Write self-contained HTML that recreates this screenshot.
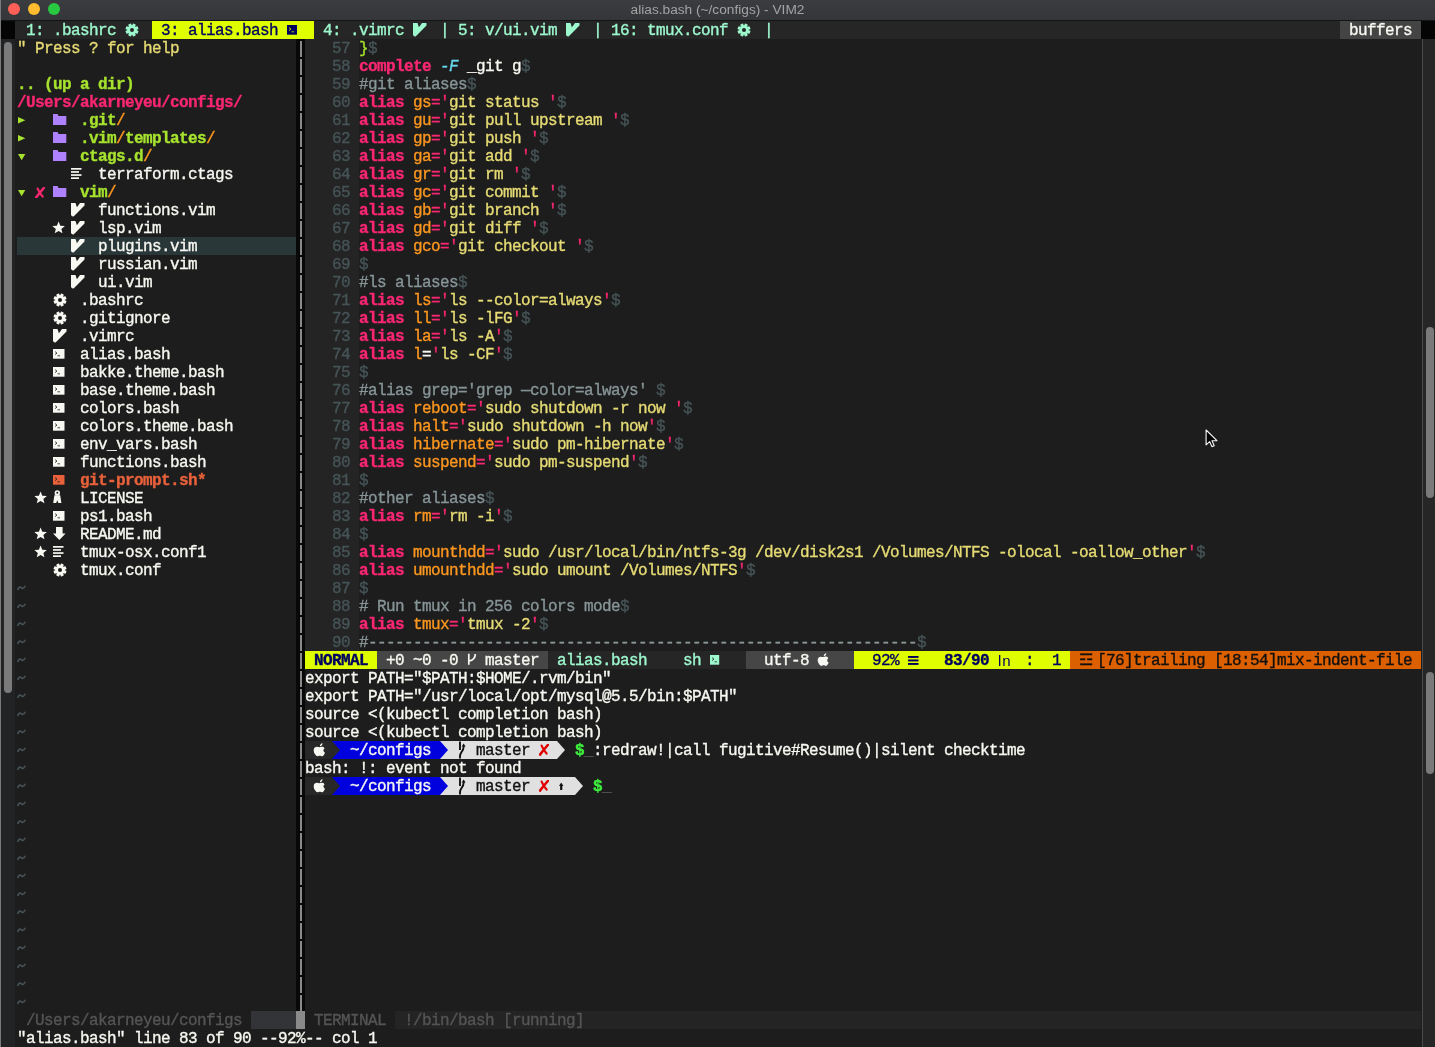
<!DOCTYPE html>
<html><head><meta charset="utf-8"><style>
html,body{margin:0;padding:0;}
body{will-change:transform;width:1435px;height:1047px;overflow:hidden;background:#1d1d1d;position:relative;}
body>div{position:absolute;}
.t{height:18px;line-height:18px;-webkit-text-stroke:0.35px currentColor;white-space:pre;font-family:"Liberation Mono",monospace;font-size:16px;letter-spacing:-0.6px;}
</style></head><body>
<div style="left:0;top:0;width:1435px;height:20px;background:linear-gradient(#3b3c40,#35363a)"></div>
<div style="left:0px;top:20px;width:1435px;height:1px;background:#141414;"></div>
<div style="left:0;top:0;width:1435px;height:20px;text-align:center;font:13.7px/19px 'Liberation Sans',sans-serif;color:#a3a3a3">alias.bash (~/configs) - VIM2</div>
<div style="left:7.800000000000001px;top:2.8px;width:12.2px;height:12.2px;border-radius:50%;background:#fe5f57"></div>
<div style="left:27.799999999999997px;top:2.8px;width:12.2px;height:12.2px;border-radius:50%;background:#febc2e"></div>
<div style="left:47.9px;top:2.8px;width:12.2px;height:12.2px;border-radius:50%;background:#28c840"></div>
<div style="left:1px;top:21px;width:14px;height:1026px;background:#222324;"></div>
<div style="left:1px;top:21px;width:14px;height:18px;background:#050505;"></div>
<div style="left:0px;top:0px;width:1px;height:1047px;background:#7a7a7a;"></div>
<div style="left:4px;top:41.5px;width:8px;height:651.5px;border-radius:4px;background:#7a7a7a"></div>
<div style="left:1421px;top:21px;width:14px;height:18px;background:#050505;"></div>
<div style="left:1421.5px;top:39px;width:1.7px;height:1008px;background:#4a4a4a;"></div>
<div style="left:1423.2px;top:39px;width:11.8px;height:1008px;background:#262626;"></div>
<div style="left:1426px;top:326.8px;width:8px;height:171px;border-radius:4px;background:#7a7a7a"></div>
<div style="left:1426px;top:671.5px;width:8px;height:102.3px;border-radius:4px;background:#7a7a7a"></div>
<div style="left:15.02px;top:21px;width:1405.98px;height:18px;background:#262626;"></div>
<div class="t" style="left:17px;top:22px;color:#9ef8ce;"> 1: .bashrc </div>
<svg style="position:absolute;left:124.5px;top:23px" width="14" height="14" viewBox="0 0 14 14"><rect x="5.45" y="0.5" width="3.1" height="3.2" rx="0.5" fill="#9ef8ce" transform="rotate(22.5 7 7)"/><rect x="5.45" y="0.5" width="3.1" height="3.2" rx="0.5" fill="#9ef8ce" transform="rotate(67.5 7 7)"/><rect x="5.45" y="0.5" width="3.1" height="3.2" rx="0.5" fill="#9ef8ce" transform="rotate(112.5 7 7)"/><rect x="5.45" y="0.5" width="3.1" height="3.2" rx="0.5" fill="#9ef8ce" transform="rotate(157.5 7 7)"/><rect x="5.45" y="0.5" width="3.1" height="3.2" rx="0.5" fill="#9ef8ce" transform="rotate(202.5 7 7)"/><rect x="5.45" y="0.5" width="3.1" height="3.2" rx="0.5" fill="#9ef8ce" transform="rotate(247.5 7 7)"/><rect x="5.45" y="0.5" width="3.1" height="3.2" rx="0.5" fill="#9ef8ce" transform="rotate(292.5 7 7)"/><rect x="5.45" y="0.5" width="3.1" height="3.2" rx="0.5" fill="#9ef8ce" transform="rotate(337.5 7 7)"/><circle cx="7" cy="7" r="4.7" fill="#9ef8ce"/><circle cx="7" cy="7" r="2.0" fill="#262626"/></svg>
<div style="left:152px;top:21px;width:162px;height:18px;background:#dfff00;"></div>
<div class="t" style="left:152px;top:22px;color:#00005f;"> 3: alias.bash    </div>
<svg style="position:absolute;left:287px;top:25px" width="12" height="10" viewBox="0 0 12 10"><rect x="0" y="0" width="10" height="9.7" fill="#00005f"/><path d="M2,2.6 L4,4.1 L2,5.6 M4.5,6.8 L7,6.8" stroke="#dfff00" stroke-width="0.8" fill="none"/></svg>
<div class="t" style="left:314px;top:22px;color:#9ef8ce;"> 4: .vimrc </div>
<svg style="position:absolute;left:413px;top:23px" width="14" height="14" viewBox="0 0 14 14"><polygon points="0,0 4.5,0 5.9,4.2 9.0,0 13.5,0 13.5,2.6 2.6,13.5 1,13.3 0,12 0,0" fill="#9ef8ce"/></svg>
<div class="t" style="left:431px;top:22px;color:#9ef8ce;"> | 5: v/ui.vim </div>
<svg style="position:absolute;left:566px;top:23px" width="14" height="14" viewBox="0 0 14 14"><polygon points="0,0 4.5,0 5.9,4.2 9.0,0 13.5,0 13.5,2.6 2.6,13.5 1,13.3 0,12 0,0" fill="#9ef8ce"/></svg>
<div class="t" style="left:584px;top:22px;color:#9ef8ce;"> | 16: tmux.conf </div>
<svg style="position:absolute;left:736.5px;top:23px" width="14" height="14" viewBox="0 0 14 14"><rect x="5.45" y="0.5" width="3.1" height="3.2" rx="0.5" fill="#9ef8ce" transform="rotate(22.5 7 7)"/><rect x="5.45" y="0.5" width="3.1" height="3.2" rx="0.5" fill="#9ef8ce" transform="rotate(67.5 7 7)"/><rect x="5.45" y="0.5" width="3.1" height="3.2" rx="0.5" fill="#9ef8ce" transform="rotate(112.5 7 7)"/><rect x="5.45" y="0.5" width="3.1" height="3.2" rx="0.5" fill="#9ef8ce" transform="rotate(157.5 7 7)"/><rect x="5.45" y="0.5" width="3.1" height="3.2" rx="0.5" fill="#9ef8ce" transform="rotate(202.5 7 7)"/><rect x="5.45" y="0.5" width="3.1" height="3.2" rx="0.5" fill="#9ef8ce" transform="rotate(247.5 7 7)"/><rect x="5.45" y="0.5" width="3.1" height="3.2" rx="0.5" fill="#9ef8ce" transform="rotate(292.5 7 7)"/><rect x="5.45" y="0.5" width="3.1" height="3.2" rx="0.5" fill="#9ef8ce" transform="rotate(337.5 7 7)"/><circle cx="7" cy="7" r="4.7" fill="#9ef8ce"/><circle cx="7" cy="7" r="2.0" fill="#262626"/></svg>
<div class="t" style="left:755px;top:22px;color:#9ef8ce;"> |</div>
<div style="left:1340px;top:21px;width:81px;height:18px;background:#444444;"></div>
<div class="t" style="left:1340px;top:22px;color:#f8f8f2;"> buffers </div>
<div style="left:17px;top:237px;width:279px;height:18px;background:#293739;"></div>
<div class="t" style="left:17px;top:40px;color:#e6db74;">" Press ? for help</div>
<div class="t" style="left:17px;top:76px;color:#a6e22e;font-weight:bold;">.. (up a dir)</div>
<div class="t" style="left:17px;top:94px;color:#f92672;font-weight:bold;">/Users/akarneyeu/configs/</div>
<svg style="position:absolute;left:17.7px;top:117px" width="8" height="7" viewBox="0 0 8 7"><polygon points="0,0 7.3,3.3 0,6.6" fill="#a6e22e"/></svg>
<svg style="position:absolute;left:52.6px;top:113px" width="14" height="13" viewBox="0 0 14 13"><path d="M0,0.9 L4.6,0.9 L5.5,3 L13.3,3 L13.3,12 L0,12 Z" fill="#ae81ff"/></svg>
<div class="t" style="left:80px;top:112px;color:#a6e22e;font-weight:bold;">.git</div>
<div class="t" style="left:116px;top:112px;color:#fd971f;">/</div>
<svg style="position:absolute;left:17.7px;top:135px" width="8" height="7" viewBox="0 0 8 7"><polygon points="0,0 7.3,3.3 0,6.6" fill="#a6e22e"/></svg>
<svg style="position:absolute;left:52.6px;top:131px" width="14" height="13" viewBox="0 0 14 13"><path d="M0,0.9 L4.6,0.9 L5.5,3 L13.3,3 L13.3,12 L0,12 Z" fill="#ae81ff"/></svg>
<div class="t" style="left:80px;top:130px;color:#a6e22e;font-weight:bold;">.vim</div>
<div class="t" style="left:116px;top:130px;color:#fd971f;">/</div>
<div class="t" style="left:125px;top:130px;color:#a6e22e;font-weight:bold;">templates</div>
<div class="t" style="left:206px;top:130px;color:#fd971f;">/</div>
<svg style="position:absolute;left:17.7px;top:154px" width="8" height="7" viewBox="0 0 8 7"><polygon points="0,0 7.3,0 3.65,6.3" fill="#a6e22e"/></svg>
<svg style="position:absolute;left:52.6px;top:149px" width="14" height="13" viewBox="0 0 14 13"><path d="M0,0.9 L4.6,0.9 L5.5,3 L13.3,3 L13.3,12 L0,12 Z" fill="#ae81ff"/></svg>
<div class="t" style="left:80px;top:148px;color:#a6e22e;font-weight:bold;">ctags.d</div>
<div class="t" style="left:143px;top:148px;color:#fd971f;">/</div>
<svg style="position:absolute;left:70.6px;top:168.2px" width="11" height="11" viewBox="0 0 11 11"><rect x="0" y="0" width="10.5" height="1.7" fill="#f8f8f2"/><rect x="0" y="3.1" width="8" height="1.7" fill="#f8f8f2"/><rect x="0" y="6.2" width="10.5" height="1.7" fill="#f8f8f2"/><rect x="0" y="9.3" width="8" height="1.7" fill="#f8f8f2"/></svg>
<div class="t" style="left:98px;top:166px;color:#f8f8f2;">terraform.ctags</div>
<svg style="position:absolute;left:17.7px;top:190px" width="8" height="7" viewBox="0 0 8 7"><polygon points="0,0 7.3,0 3.65,6.3" fill="#a6e22e"/></svg>
<svg style="position:absolute;left:35px;top:187px" width="10" height="11" viewBox="0 0 10 11"><path d="M9,0.8 C6.5,3.8 3.8,7.2 1,10.6" stroke="#f92672" stroke-width="2.5" stroke-linecap="round" fill="none"/><path d="M2.6,1.6 C4,4.6 5.6,7.4 7.6,9.6" stroke="#f92672" stroke-width="2.2" stroke-linecap="round" fill="none"/></svg>
<svg style="position:absolute;left:52.6px;top:185px" width="14" height="13" viewBox="0 0 14 13"><path d="M0,0.9 L4.6,0.9 L5.5,3 L13.3,3 L13.3,12 L0,12 Z" fill="#ae81ff"/></svg>
<div class="t" style="left:80px;top:184px;color:#a6e22e;font-weight:bold;">vim</div>
<div class="t" style="left:107px;top:184px;color:#fd971f;">/</div>
<svg style="position:absolute;left:70.5px;top:203px" width="14" height="14" viewBox="0 0 14 14"><polygon points="0,0 4.5,0 5.9,4.2 9.0,0 13.5,0 13.5,2.6 2.6,13.5 1,13.3 0,12 0,0" fill="#f8f8f2"/></svg>
<div class="t" style="left:98px;top:202px;color:#f8f8f2;">functions.vim</div>
<svg style="position:absolute;left:70.5px;top:221px" width="14" height="14" viewBox="0 0 14 14"><polygon points="0,0 4.5,0 5.9,4.2 9.0,0 13.5,0 13.5,2.6 2.6,13.5 1,13.3 0,12 0,0" fill="#f8f8f2"/></svg>
<div class="t" style="left:98px;top:220px;color:#f8f8f2;">lsp.vim</div>
<svg style="position:absolute;left:70.5px;top:239px" width="14" height="14" viewBox="0 0 14 14"><polygon points="0,0 4.5,0 5.9,4.2 9.0,0 13.5,0 13.5,2.6 2.6,13.5 1,13.3 0,12 0,0" fill="#f8f8f2"/></svg>
<div class="t" style="left:98px;top:238px;color:#f8f8f2;">plugins.vim</div>
<svg style="position:absolute;left:70.5px;top:257px" width="14" height="14" viewBox="0 0 14 14"><polygon points="0,0 4.5,0 5.9,4.2 9.0,0 13.5,0 13.5,2.6 2.6,13.5 1,13.3 0,12 0,0" fill="#f8f8f2"/></svg>
<div class="t" style="left:98px;top:256px;color:#f8f8f2;">russian.vim</div>
<svg style="position:absolute;left:70.5px;top:275px" width="14" height="14" viewBox="0 0 14 14"><polygon points="0,0 4.5,0 5.9,4.2 9.0,0 13.5,0 13.5,2.6 2.6,13.5 1,13.3 0,12 0,0" fill="#f8f8f2"/></svg>
<div class="t" style="left:98px;top:274px;color:#f8f8f2;">ui.vim</div>
<svg style="position:absolute;left:52.4px;top:220.5px" width="14" height="14" viewBox="0 0 14 14"><polygon points="6.60,0.40 8.30,4.65 12.88,4.96 9.36,7.90 10.48,12.34 6.60,9.90 2.72,12.34 3.84,7.90 0.32,4.96 4.90,4.65" fill="#f8f8f2"/></svg>
<svg style="position:absolute;left:52.5px;top:293px" width="14" height="14" viewBox="0 0 14 14"><rect x="5.45" y="0.5" width="3.1" height="3.2" rx="0.5" fill="#f8f8f2" transform="rotate(22.5 7 7)"/><rect x="5.45" y="0.5" width="3.1" height="3.2" rx="0.5" fill="#f8f8f2" transform="rotate(67.5 7 7)"/><rect x="5.45" y="0.5" width="3.1" height="3.2" rx="0.5" fill="#f8f8f2" transform="rotate(112.5 7 7)"/><rect x="5.45" y="0.5" width="3.1" height="3.2" rx="0.5" fill="#f8f8f2" transform="rotate(157.5 7 7)"/><rect x="5.45" y="0.5" width="3.1" height="3.2" rx="0.5" fill="#f8f8f2" transform="rotate(202.5 7 7)"/><rect x="5.45" y="0.5" width="3.1" height="3.2" rx="0.5" fill="#f8f8f2" transform="rotate(247.5 7 7)"/><rect x="5.45" y="0.5" width="3.1" height="3.2" rx="0.5" fill="#f8f8f2" transform="rotate(292.5 7 7)"/><rect x="5.45" y="0.5" width="3.1" height="3.2" rx="0.5" fill="#f8f8f2" transform="rotate(337.5 7 7)"/><circle cx="7" cy="7" r="4.7" fill="#f8f8f2"/><circle cx="7" cy="7" r="2.0" fill="#1d1d1d"/></svg>
<div class="t" style="left:80px;top:292px;color:#f8f8f2;">.bashrc</div>
<svg style="position:absolute;left:52.5px;top:311px" width="14" height="14" viewBox="0 0 14 14"><rect x="5.45" y="0.5" width="3.1" height="3.2" rx="0.5" fill="#f8f8f2" transform="rotate(22.5 7 7)"/><rect x="5.45" y="0.5" width="3.1" height="3.2" rx="0.5" fill="#f8f8f2" transform="rotate(67.5 7 7)"/><rect x="5.45" y="0.5" width="3.1" height="3.2" rx="0.5" fill="#f8f8f2" transform="rotate(112.5 7 7)"/><rect x="5.45" y="0.5" width="3.1" height="3.2" rx="0.5" fill="#f8f8f2" transform="rotate(157.5 7 7)"/><rect x="5.45" y="0.5" width="3.1" height="3.2" rx="0.5" fill="#f8f8f2" transform="rotate(202.5 7 7)"/><rect x="5.45" y="0.5" width="3.1" height="3.2" rx="0.5" fill="#f8f8f2" transform="rotate(247.5 7 7)"/><rect x="5.45" y="0.5" width="3.1" height="3.2" rx="0.5" fill="#f8f8f2" transform="rotate(292.5 7 7)"/><rect x="5.45" y="0.5" width="3.1" height="3.2" rx="0.5" fill="#f8f8f2" transform="rotate(337.5 7 7)"/><circle cx="7" cy="7" r="4.7" fill="#f8f8f2"/><circle cx="7" cy="7" r="2.0" fill="#1d1d1d"/></svg>
<div class="t" style="left:80px;top:310px;color:#f8f8f2;">.gitignore</div>
<svg style="position:absolute;left:52.7px;top:329px" width="14" height="14" viewBox="0 0 14 14"><polygon points="0,0 4.5,0 5.9,4.2 9.0,0 13.5,0 13.5,2.6 2.6,13.5 1,13.3 0,12 0,0" fill="#f8f8f2"/></svg>
<div class="t" style="left:80px;top:328px;color:#f8f8f2;">.vimrc</div>
<svg style="position:absolute;left:52.7px;top:349px" width="12" height="10" viewBox="0 0 12 10"><rect x="0" y="0" width="11.5" height="9.7" fill="#f8f8f2"/><path d="M2,2.6 L4,4.1 L2,5.6 M4.5,6.8 L7,6.8" stroke="#1d1d1d" stroke-width="0.8" fill="none"/></svg>
<div class="t" style="left:80px;top:346px;color:#f8f8f2;">alias.bash</div>
<svg style="position:absolute;left:52.7px;top:367px" width="12" height="10" viewBox="0 0 12 10"><rect x="0" y="0" width="11.5" height="9.7" fill="#f8f8f2"/><path d="M2,2.6 L4,4.1 L2,5.6 M4.5,6.8 L7,6.8" stroke="#1d1d1d" stroke-width="0.8" fill="none"/></svg>
<div class="t" style="left:80px;top:364px;color:#f8f8f2;">bakke.theme.bash</div>
<svg style="position:absolute;left:52.7px;top:385px" width="12" height="10" viewBox="0 0 12 10"><rect x="0" y="0" width="11.5" height="9.7" fill="#f8f8f2"/><path d="M2,2.6 L4,4.1 L2,5.6 M4.5,6.8 L7,6.8" stroke="#1d1d1d" stroke-width="0.8" fill="none"/></svg>
<div class="t" style="left:80px;top:382px;color:#f8f8f2;">base.theme.bash</div>
<svg style="position:absolute;left:52.7px;top:403px" width="12" height="10" viewBox="0 0 12 10"><rect x="0" y="0" width="11.5" height="9.7" fill="#f8f8f2"/><path d="M2,2.6 L4,4.1 L2,5.6 M4.5,6.8 L7,6.8" stroke="#1d1d1d" stroke-width="0.8" fill="none"/></svg>
<div class="t" style="left:80px;top:400px;color:#f8f8f2;">colors.bash</div>
<svg style="position:absolute;left:52.7px;top:421px" width="12" height="10" viewBox="0 0 12 10"><rect x="0" y="0" width="11.5" height="9.7" fill="#f8f8f2"/><path d="M2,2.6 L4,4.1 L2,5.6 M4.5,6.8 L7,6.8" stroke="#1d1d1d" stroke-width="0.8" fill="none"/></svg>
<div class="t" style="left:80px;top:418px;color:#f8f8f2;">colors.theme.bash</div>
<svg style="position:absolute;left:52.7px;top:439px" width="12" height="10" viewBox="0 0 12 10"><rect x="0" y="0" width="11.5" height="9.7" fill="#f8f8f2"/><path d="M2,2.6 L4,4.1 L2,5.6 M4.5,6.8 L7,6.8" stroke="#1d1d1d" stroke-width="0.8" fill="none"/></svg>
<div class="t" style="left:80px;top:436px;color:#f8f8f2;">env_vars.bash</div>
<svg style="position:absolute;left:52.7px;top:457px" width="12" height="10" viewBox="0 0 12 10"><rect x="0" y="0" width="11.5" height="9.7" fill="#f8f8f2"/><path d="M2,2.6 L4,4.1 L2,5.6 M4.5,6.8 L7,6.8" stroke="#1d1d1d" stroke-width="0.8" fill="none"/></svg>
<div class="t" style="left:80px;top:454px;color:#f8f8f2;">functions.bash</div>
<svg style="position:absolute;left:52.7px;top:475px" width="12" height="10" viewBox="0 0 12 10"><rect x="0" y="0" width="11.5" height="9.7" fill="#e8613b"/><path d="M2,2.6 L4,4.1 L2,5.6 M4.5,6.8 L7,6.8" stroke="#1d1d1d" stroke-width="0.8" fill="none"/></svg>
<div class="t" style="left:80px;top:472px;color:#e8613b;font-weight:bold;">git-prompt.sh*</div>
<svg style="position:absolute;left:53px;top:490px" width="9" height="14" viewBox="0 0 9 14"><circle cx="4.3" cy="3.0" r="2.7" fill="#f8f8f2"/><circle cx="4.3" cy="2.8" r="1.0" fill="#1d1d1d"/><path d="M1.4,5.2 L7.2,5.2 L8.4,13 L5.4,13 L4.3,10.2 L3.2,13 L0.2,13 Z" fill="#f8f8f2"/></svg>
<div class="t" style="left:80px;top:490px;color:#f8f8f2;">LICENSE</div>
<svg style="position:absolute;left:52.7px;top:511px" width="12" height="10" viewBox="0 0 12 10"><rect x="0" y="0" width="11.5" height="9.7" fill="#f8f8f2"/><path d="M2,2.6 L4,4.1 L2,5.6 M4.5,6.8 L7,6.8" stroke="#1d1d1d" stroke-width="0.8" fill="none"/></svg>
<div class="t" style="left:80px;top:508px;color:#f8f8f2;">ps1.bash</div>
<svg style="position:absolute;left:52.6px;top:526.5px" width="13" height="13" viewBox="0 0 13 13"><path d="M3,0 L9.6,0 L9.6,6.5 L12.6,6.5 L6.3,13 L0,6.5 L3,6.5 Z" fill="#f8f8f2"/></svg>
<div class="t" style="left:80px;top:526px;color:#f8f8f2;">README.md</div>
<svg style="position:absolute;left:52.6px;top:545.6px" width="11" height="11" viewBox="0 0 11 11"><rect x="0" y="0" width="10.5" height="1.7" fill="#f8f8f2"/><rect x="0" y="3.1" width="8" height="1.7" fill="#f8f8f2"/><rect x="0" y="6.2" width="10.5" height="1.7" fill="#f8f8f2"/><rect x="0" y="9.3" width="8" height="1.7" fill="#f8f8f2"/></svg>
<div class="t" style="left:80px;top:544px;color:#f8f8f2;">tmux-osx.conf1</div>
<svg style="position:absolute;left:52.5px;top:563px" width="14" height="14" viewBox="0 0 14 14"><rect x="5.45" y="0.5" width="3.1" height="3.2" rx="0.5" fill="#f8f8f2" transform="rotate(22.5 7 7)"/><rect x="5.45" y="0.5" width="3.1" height="3.2" rx="0.5" fill="#f8f8f2" transform="rotate(67.5 7 7)"/><rect x="5.45" y="0.5" width="3.1" height="3.2" rx="0.5" fill="#f8f8f2" transform="rotate(112.5 7 7)"/><rect x="5.45" y="0.5" width="3.1" height="3.2" rx="0.5" fill="#f8f8f2" transform="rotate(157.5 7 7)"/><rect x="5.45" y="0.5" width="3.1" height="3.2" rx="0.5" fill="#f8f8f2" transform="rotate(202.5 7 7)"/><rect x="5.45" y="0.5" width="3.1" height="3.2" rx="0.5" fill="#f8f8f2" transform="rotate(247.5 7 7)"/><rect x="5.45" y="0.5" width="3.1" height="3.2" rx="0.5" fill="#f8f8f2" transform="rotate(292.5 7 7)"/><rect x="5.45" y="0.5" width="3.1" height="3.2" rx="0.5" fill="#f8f8f2" transform="rotate(337.5 7 7)"/><circle cx="7" cy="7" r="4.7" fill="#f8f8f2"/><circle cx="7" cy="7" r="2.0" fill="#1d1d1d"/></svg>
<div class="t" style="left:80px;top:562px;color:#f8f8f2;">tmux.conf</div>
<svg style="position:absolute;left:34.4px;top:490.5px" width="14" height="14" viewBox="0 0 14 14"><polygon points="6.60,0.40 8.30,4.65 12.88,4.96 9.36,7.90 10.48,12.34 6.60,9.90 2.72,12.34 3.84,7.90 0.32,4.96 4.90,4.65" fill="#f8f8f2"/></svg>
<svg style="position:absolute;left:34.4px;top:526.5px" width="14" height="14" viewBox="0 0 14 14"><polygon points="6.60,0.40 8.30,4.65 12.88,4.96 9.36,7.90 10.48,12.34 6.60,9.90 2.72,12.34 3.84,7.90 0.32,4.96 4.90,4.65" fill="#f8f8f2"/></svg>
<svg style="position:absolute;left:34.4px;top:544.5px" width="14" height="14" viewBox="0 0 14 14"><polygon points="6.60,0.40 8.30,4.65 12.88,4.96 9.36,7.90 10.48,12.34 6.60,9.90 2.72,12.34 3.84,7.90 0.32,4.96 4.90,4.65" fill="#f8f8f2"/></svg>
<svg style="position:absolute;left:16.8px;top:585.4px" width="9" height="6" viewBox="0 0 9 6"><path d="M1,4.3 C1.6,2.2 2.8,1.6 4.2,2.6 C5.6,3.8 6.8,3.6 7.8,1.5" stroke="#465457" stroke-width="1.7" fill="none" stroke-linecap="round"/></svg>
<svg style="position:absolute;left:16.8px;top:603.4px" width="9" height="6" viewBox="0 0 9 6"><path d="M1,4.3 C1.6,2.2 2.8,1.6 4.2,2.6 C5.6,3.8 6.8,3.6 7.8,1.5" stroke="#465457" stroke-width="1.7" fill="none" stroke-linecap="round"/></svg>
<svg style="position:absolute;left:16.8px;top:621.4px" width="9" height="6" viewBox="0 0 9 6"><path d="M1,4.3 C1.6,2.2 2.8,1.6 4.2,2.6 C5.6,3.8 6.8,3.6 7.8,1.5" stroke="#465457" stroke-width="1.7" fill="none" stroke-linecap="round"/></svg>
<svg style="position:absolute;left:16.8px;top:639.4px" width="9" height="6" viewBox="0 0 9 6"><path d="M1,4.3 C1.6,2.2 2.8,1.6 4.2,2.6 C5.6,3.8 6.8,3.6 7.8,1.5" stroke="#465457" stroke-width="1.7" fill="none" stroke-linecap="round"/></svg>
<svg style="position:absolute;left:16.8px;top:657.4px" width="9" height="6" viewBox="0 0 9 6"><path d="M1,4.3 C1.6,2.2 2.8,1.6 4.2,2.6 C5.6,3.8 6.8,3.6 7.8,1.5" stroke="#465457" stroke-width="1.7" fill="none" stroke-linecap="round"/></svg>
<svg style="position:absolute;left:16.8px;top:675.4px" width="9" height="6" viewBox="0 0 9 6"><path d="M1,4.3 C1.6,2.2 2.8,1.6 4.2,2.6 C5.6,3.8 6.8,3.6 7.8,1.5" stroke="#465457" stroke-width="1.7" fill="none" stroke-linecap="round"/></svg>
<svg style="position:absolute;left:16.8px;top:693.4px" width="9" height="6" viewBox="0 0 9 6"><path d="M1,4.3 C1.6,2.2 2.8,1.6 4.2,2.6 C5.6,3.8 6.8,3.6 7.8,1.5" stroke="#465457" stroke-width="1.7" fill="none" stroke-linecap="round"/></svg>
<svg style="position:absolute;left:16.8px;top:711.4px" width="9" height="6" viewBox="0 0 9 6"><path d="M1,4.3 C1.6,2.2 2.8,1.6 4.2,2.6 C5.6,3.8 6.8,3.6 7.8,1.5" stroke="#465457" stroke-width="1.7" fill="none" stroke-linecap="round"/></svg>
<svg style="position:absolute;left:16.8px;top:729.4px" width="9" height="6" viewBox="0 0 9 6"><path d="M1,4.3 C1.6,2.2 2.8,1.6 4.2,2.6 C5.6,3.8 6.8,3.6 7.8,1.5" stroke="#465457" stroke-width="1.7" fill="none" stroke-linecap="round"/></svg>
<svg style="position:absolute;left:16.8px;top:747.4px" width="9" height="6" viewBox="0 0 9 6"><path d="M1,4.3 C1.6,2.2 2.8,1.6 4.2,2.6 C5.6,3.8 6.8,3.6 7.8,1.5" stroke="#465457" stroke-width="1.7" fill="none" stroke-linecap="round"/></svg>
<svg style="position:absolute;left:16.8px;top:765.4px" width="9" height="6" viewBox="0 0 9 6"><path d="M1,4.3 C1.6,2.2 2.8,1.6 4.2,2.6 C5.6,3.8 6.8,3.6 7.8,1.5" stroke="#465457" stroke-width="1.7" fill="none" stroke-linecap="round"/></svg>
<svg style="position:absolute;left:16.8px;top:783.4px" width="9" height="6" viewBox="0 0 9 6"><path d="M1,4.3 C1.6,2.2 2.8,1.6 4.2,2.6 C5.6,3.8 6.8,3.6 7.8,1.5" stroke="#465457" stroke-width="1.7" fill="none" stroke-linecap="round"/></svg>
<svg style="position:absolute;left:16.8px;top:801.4px" width="9" height="6" viewBox="0 0 9 6"><path d="M1,4.3 C1.6,2.2 2.8,1.6 4.2,2.6 C5.6,3.8 6.8,3.6 7.8,1.5" stroke="#465457" stroke-width="1.7" fill="none" stroke-linecap="round"/></svg>
<svg style="position:absolute;left:16.8px;top:819.4px" width="9" height="6" viewBox="0 0 9 6"><path d="M1,4.3 C1.6,2.2 2.8,1.6 4.2,2.6 C5.6,3.8 6.8,3.6 7.8,1.5" stroke="#465457" stroke-width="1.7" fill="none" stroke-linecap="round"/></svg>
<svg style="position:absolute;left:16.8px;top:837.4px" width="9" height="6" viewBox="0 0 9 6"><path d="M1,4.3 C1.6,2.2 2.8,1.6 4.2,2.6 C5.6,3.8 6.8,3.6 7.8,1.5" stroke="#465457" stroke-width="1.7" fill="none" stroke-linecap="round"/></svg>
<svg style="position:absolute;left:16.8px;top:855.4px" width="9" height="6" viewBox="0 0 9 6"><path d="M1,4.3 C1.6,2.2 2.8,1.6 4.2,2.6 C5.6,3.8 6.8,3.6 7.8,1.5" stroke="#465457" stroke-width="1.7" fill="none" stroke-linecap="round"/></svg>
<svg style="position:absolute;left:16.8px;top:873.4px" width="9" height="6" viewBox="0 0 9 6"><path d="M1,4.3 C1.6,2.2 2.8,1.6 4.2,2.6 C5.6,3.8 6.8,3.6 7.8,1.5" stroke="#465457" stroke-width="1.7" fill="none" stroke-linecap="round"/></svg>
<svg style="position:absolute;left:16.8px;top:891.4px" width="9" height="6" viewBox="0 0 9 6"><path d="M1,4.3 C1.6,2.2 2.8,1.6 4.2,2.6 C5.6,3.8 6.8,3.6 7.8,1.5" stroke="#465457" stroke-width="1.7" fill="none" stroke-linecap="round"/></svg>
<svg style="position:absolute;left:16.8px;top:909.4px" width="9" height="6" viewBox="0 0 9 6"><path d="M1,4.3 C1.6,2.2 2.8,1.6 4.2,2.6 C5.6,3.8 6.8,3.6 7.8,1.5" stroke="#465457" stroke-width="1.7" fill="none" stroke-linecap="round"/></svg>
<svg style="position:absolute;left:16.8px;top:927.4px" width="9" height="6" viewBox="0 0 9 6"><path d="M1,4.3 C1.6,2.2 2.8,1.6 4.2,2.6 C5.6,3.8 6.8,3.6 7.8,1.5" stroke="#465457" stroke-width="1.7" fill="none" stroke-linecap="round"/></svg>
<svg style="position:absolute;left:16.8px;top:945.4px" width="9" height="6" viewBox="0 0 9 6"><path d="M1,4.3 C1.6,2.2 2.8,1.6 4.2,2.6 C5.6,3.8 6.8,3.6 7.8,1.5" stroke="#465457" stroke-width="1.7" fill="none" stroke-linecap="round"/></svg>
<svg style="position:absolute;left:16.8px;top:963.4px" width="9" height="6" viewBox="0 0 9 6"><path d="M1,4.3 C1.6,2.2 2.8,1.6 4.2,2.6 C5.6,3.8 6.8,3.6 7.8,1.5" stroke="#465457" stroke-width="1.7" fill="none" stroke-linecap="round"/></svg>
<svg style="position:absolute;left:16.8px;top:981.4px" width="9" height="6" viewBox="0 0 9 6"><path d="M1,4.3 C1.6,2.2 2.8,1.6 4.2,2.6 C5.6,3.8 6.8,3.6 7.8,1.5" stroke="#465457" stroke-width="1.7" fill="none" stroke-linecap="round"/></svg>
<svg style="position:absolute;left:16.8px;top:999.4px" width="9" height="6" viewBox="0 0 9 6"><path d="M1,4.3 C1.6,2.2 2.8,1.6 4.2,2.6 C5.6,3.8 6.8,3.6 7.8,1.5" stroke="#465457" stroke-width="1.7" fill="none" stroke-linecap="round"/></svg>
<div style="left:296px;top:39px;width:9px;height:972px;background:#080808;"></div>
<div style="left:299.5px;top:41.3px;width:2.2px;height:15.3px;background:#8a8a8a;"></div>
<div style="left:299.5px;top:59.3px;width:2.2px;height:15.3px;background:#8a8a8a;"></div>
<div style="left:299.5px;top:77.3px;width:2.2px;height:15.3px;background:#8a8a8a;"></div>
<div style="left:299.5px;top:95.3px;width:2.2px;height:15.3px;background:#8a8a8a;"></div>
<div style="left:299.5px;top:113.3px;width:2.2px;height:15.3px;background:#8a8a8a;"></div>
<div style="left:299.5px;top:131.3px;width:2.2px;height:15.3px;background:#8a8a8a;"></div>
<div style="left:299.5px;top:149.3px;width:2.2px;height:15.3px;background:#8a8a8a;"></div>
<div style="left:299.5px;top:167.3px;width:2.2px;height:15.3px;background:#8a8a8a;"></div>
<div style="left:299.5px;top:185.3px;width:2.2px;height:15.3px;background:#8a8a8a;"></div>
<div style="left:299.5px;top:203.3px;width:2.2px;height:15.3px;background:#8a8a8a;"></div>
<div style="left:299.5px;top:221.3px;width:2.2px;height:15.3px;background:#8a8a8a;"></div>
<div style="left:299.5px;top:239.3px;width:2.2px;height:15.3px;background:#8a8a8a;"></div>
<div style="left:299.5px;top:257.3px;width:2.2px;height:15.3px;background:#8a8a8a;"></div>
<div style="left:299.5px;top:275.3px;width:2.2px;height:15.3px;background:#8a8a8a;"></div>
<div style="left:299.5px;top:293.3px;width:2.2px;height:15.3px;background:#8a8a8a;"></div>
<div style="left:299.5px;top:311.3px;width:2.2px;height:15.3px;background:#8a8a8a;"></div>
<div style="left:299.5px;top:329.3px;width:2.2px;height:15.3px;background:#8a8a8a;"></div>
<div style="left:299.5px;top:347.3px;width:2.2px;height:15.3px;background:#8a8a8a;"></div>
<div style="left:299.5px;top:365.3px;width:2.2px;height:15.3px;background:#8a8a8a;"></div>
<div style="left:299.5px;top:383.3px;width:2.2px;height:15.3px;background:#8a8a8a;"></div>
<div style="left:299.5px;top:401.3px;width:2.2px;height:15.3px;background:#8a8a8a;"></div>
<div style="left:299.5px;top:419.3px;width:2.2px;height:15.3px;background:#8a8a8a;"></div>
<div style="left:299.5px;top:437.3px;width:2.2px;height:15.3px;background:#8a8a8a;"></div>
<div style="left:299.5px;top:455.3px;width:2.2px;height:15.3px;background:#8a8a8a;"></div>
<div style="left:299.5px;top:473.3px;width:2.2px;height:15.3px;background:#8a8a8a;"></div>
<div style="left:299.5px;top:491.3px;width:2.2px;height:15.3px;background:#8a8a8a;"></div>
<div style="left:299.5px;top:509.3px;width:2.2px;height:15.3px;background:#8a8a8a;"></div>
<div style="left:299.5px;top:527.3px;width:2.2px;height:15.3px;background:#8a8a8a;"></div>
<div style="left:299.5px;top:545.3px;width:2.2px;height:15.3px;background:#8a8a8a;"></div>
<div style="left:299.5px;top:563.3px;width:2.2px;height:15.3px;background:#8a8a8a;"></div>
<div style="left:299.5px;top:581.3px;width:2.2px;height:15.3px;background:#8a8a8a;"></div>
<div style="left:299.5px;top:599.3px;width:2.2px;height:15.3px;background:#8a8a8a;"></div>
<div style="left:299.5px;top:617.3px;width:2.2px;height:15.3px;background:#8a8a8a;"></div>
<div style="left:299.5px;top:635.3px;width:2.2px;height:15.3px;background:#8a8a8a;"></div>
<div style="left:299.5px;top:653.3px;width:2.2px;height:15.3px;background:#8a8a8a;"></div>
<div style="left:299.5px;top:671.3px;width:2.2px;height:15.3px;background:#8a8a8a;"></div>
<div style="left:299.5px;top:689.3px;width:2.2px;height:15.3px;background:#8a8a8a;"></div>
<div style="left:299.5px;top:707.3px;width:2.2px;height:15.3px;background:#8a8a8a;"></div>
<div style="left:299.5px;top:725.3px;width:2.2px;height:15.3px;background:#8a8a8a;"></div>
<div style="left:299.5px;top:743.3px;width:2.2px;height:15.3px;background:#8a8a8a;"></div>
<div style="left:299.5px;top:761.3px;width:2.2px;height:15.3px;background:#8a8a8a;"></div>
<div style="left:299.5px;top:779.3px;width:2.2px;height:15.3px;background:#8a8a8a;"></div>
<div style="left:299.5px;top:797.3px;width:2.2px;height:15.3px;background:#8a8a8a;"></div>
<div style="left:299.5px;top:815.3px;width:2.2px;height:15.3px;background:#8a8a8a;"></div>
<div style="left:299.5px;top:833.3px;width:2.2px;height:15.3px;background:#8a8a8a;"></div>
<div style="left:299.5px;top:851.3px;width:2.2px;height:15.3px;background:#8a8a8a;"></div>
<div style="left:299.5px;top:869.3px;width:2.2px;height:15.3px;background:#8a8a8a;"></div>
<div style="left:299.5px;top:887.3px;width:2.2px;height:15.3px;background:#8a8a8a;"></div>
<div style="left:299.5px;top:905.3px;width:2.2px;height:15.3px;background:#8a8a8a;"></div>
<div style="left:299.5px;top:923.3px;width:2.2px;height:15.3px;background:#8a8a8a;"></div>
<div style="left:299.5px;top:941.3px;width:2.2px;height:15.3px;background:#8a8a8a;"></div>
<div style="left:299.5px;top:959.3px;width:2.2px;height:15.3px;background:#8a8a8a;"></div>
<div style="left:299.5px;top:977.3px;width:2.2px;height:15.3px;background:#8a8a8a;"></div>
<div style="left:299.5px;top:995.3px;width:2.2px;height:15.3px;background:#8a8a8a;"></div>
<div style="left:305px;top:39px;width:54px;height:612px;background:#242424;"></div>
<div class="t" style="left:332px;top:40px;color:#465457;">57</div>
<div class="t" style="left:359px;top:40px;color:#a6e22e;">}</div>
<div class="t" style="left:368px;top:40px;color:#465457;">$</div>
<div class="t" style="left:332px;top:58px;color:#465457;">58</div>
<div class="t" style="left:359px;top:58px;color:#f92672;font-weight:bold;">complete</div>
<div class="t" style="left:440px;top:58px;color:#66d9ef;font-style:italic;">-F</div>
<div class="t" style="left:458px;top:58px;color:#f8f8f2;"> _git g</div>
<div class="t" style="left:521px;top:58px;color:#465457;">$</div>
<div class="t" style="left:332px;top:76px;color:#465457;">59</div>
<div class="t" style="left:359px;top:76px;color:#879597;">#git aliases</div>
<div class="t" style="left:467px;top:76px;color:#465457;">$</div>
<div class="t" style="left:332px;top:94px;color:#465457;">60</div>
<div class="t" style="left:359px;top:94px;color:#f92672;font-weight:bold;">alias</div>
<div class="t" style="left:413px;top:94px;color:#fd971f;">gs</div>
<div class="t" style="left:431px;top:94px;color:#f92672;">=</div>
<div class="t" style="left:440px;top:94px;color:#f92672;">'</div>
<div class="t" style="left:449px;top:94px;color:#e6db74;">git status </div>
<div class="t" style="left:548px;top:94px;color:#f92672;">'</div>
<div class="t" style="left:557px;top:94px;color:#465457;">$</div>
<div class="t" style="left:332px;top:112px;color:#465457;">61</div>
<div class="t" style="left:359px;top:112px;color:#f92672;font-weight:bold;">alias</div>
<div class="t" style="left:413px;top:112px;color:#fd971f;">gu</div>
<div class="t" style="left:431px;top:112px;color:#f92672;">=</div>
<div class="t" style="left:440px;top:112px;color:#f92672;">'</div>
<div class="t" style="left:449px;top:112px;color:#e6db74;">git pull upstream </div>
<div class="t" style="left:611px;top:112px;color:#f92672;">'</div>
<div class="t" style="left:620px;top:112px;color:#465457;">$</div>
<div class="t" style="left:332px;top:130px;color:#465457;">62</div>
<div class="t" style="left:359px;top:130px;color:#f92672;font-weight:bold;">alias</div>
<div class="t" style="left:413px;top:130px;color:#fd971f;">gp</div>
<div class="t" style="left:431px;top:130px;color:#f92672;">=</div>
<div class="t" style="left:440px;top:130px;color:#f92672;">'</div>
<div class="t" style="left:449px;top:130px;color:#e6db74;">git push </div>
<div class="t" style="left:530px;top:130px;color:#f92672;">'</div>
<div class="t" style="left:539px;top:130px;color:#465457;">$</div>
<div class="t" style="left:332px;top:148px;color:#465457;">63</div>
<div class="t" style="left:359px;top:148px;color:#f92672;font-weight:bold;">alias</div>
<div class="t" style="left:413px;top:148px;color:#fd971f;">ga</div>
<div class="t" style="left:431px;top:148px;color:#f92672;">=</div>
<div class="t" style="left:440px;top:148px;color:#f92672;">'</div>
<div class="t" style="left:449px;top:148px;color:#e6db74;">git add </div>
<div class="t" style="left:521px;top:148px;color:#f92672;">'</div>
<div class="t" style="left:530px;top:148px;color:#465457;">$</div>
<div class="t" style="left:332px;top:166px;color:#465457;">64</div>
<div class="t" style="left:359px;top:166px;color:#f92672;font-weight:bold;">alias</div>
<div class="t" style="left:413px;top:166px;color:#fd971f;">gr</div>
<div class="t" style="left:431px;top:166px;color:#f92672;">=</div>
<div class="t" style="left:440px;top:166px;color:#f92672;">'</div>
<div class="t" style="left:449px;top:166px;color:#e6db74;">git rm </div>
<div class="t" style="left:512px;top:166px;color:#f92672;">'</div>
<div class="t" style="left:521px;top:166px;color:#465457;">$</div>
<div class="t" style="left:332px;top:184px;color:#465457;">65</div>
<div class="t" style="left:359px;top:184px;color:#f92672;font-weight:bold;">alias</div>
<div class="t" style="left:413px;top:184px;color:#fd971f;">gc</div>
<div class="t" style="left:431px;top:184px;color:#f92672;">=</div>
<div class="t" style="left:440px;top:184px;color:#f92672;">'</div>
<div class="t" style="left:449px;top:184px;color:#e6db74;">git commit </div>
<div class="t" style="left:548px;top:184px;color:#f92672;">'</div>
<div class="t" style="left:557px;top:184px;color:#465457;">$</div>
<div class="t" style="left:332px;top:202px;color:#465457;">66</div>
<div class="t" style="left:359px;top:202px;color:#f92672;font-weight:bold;">alias</div>
<div class="t" style="left:413px;top:202px;color:#fd971f;">gb</div>
<div class="t" style="left:431px;top:202px;color:#f92672;">=</div>
<div class="t" style="left:440px;top:202px;color:#f92672;">'</div>
<div class="t" style="left:449px;top:202px;color:#e6db74;">git branch </div>
<div class="t" style="left:548px;top:202px;color:#f92672;">'</div>
<div class="t" style="left:557px;top:202px;color:#465457;">$</div>
<div class="t" style="left:332px;top:220px;color:#465457;">67</div>
<div class="t" style="left:359px;top:220px;color:#f92672;font-weight:bold;">alias</div>
<div class="t" style="left:413px;top:220px;color:#fd971f;">gd</div>
<div class="t" style="left:431px;top:220px;color:#f92672;">=</div>
<div class="t" style="left:440px;top:220px;color:#f92672;">'</div>
<div class="t" style="left:449px;top:220px;color:#e6db74;">git diff </div>
<div class="t" style="left:530px;top:220px;color:#f92672;">'</div>
<div class="t" style="left:539px;top:220px;color:#465457;">$</div>
<div class="t" style="left:332px;top:238px;color:#465457;">68</div>
<div class="t" style="left:359px;top:238px;color:#f92672;font-weight:bold;">alias</div>
<div class="t" style="left:413px;top:238px;color:#fd971f;">gco</div>
<div class="t" style="left:440px;top:238px;color:#f92672;">=</div>
<div class="t" style="left:449px;top:238px;color:#f92672;">'</div>
<div class="t" style="left:458px;top:238px;color:#e6db74;">git checkout </div>
<div class="t" style="left:575px;top:238px;color:#f92672;">'</div>
<div class="t" style="left:584px;top:238px;color:#465457;">$</div>
<div class="t" style="left:332px;top:256px;color:#465457;">69</div>
<div class="t" style="left:359px;top:256px;color:#465457;">$</div>
<div class="t" style="left:332px;top:274px;color:#465457;">70</div>
<div class="t" style="left:359px;top:274px;color:#879597;">#ls aliases</div>
<div class="t" style="left:458px;top:274px;color:#465457;">$</div>
<div class="t" style="left:332px;top:292px;color:#465457;">71</div>
<div class="t" style="left:359px;top:292px;color:#f92672;font-weight:bold;">alias</div>
<div class="t" style="left:413px;top:292px;color:#fd971f;">ls</div>
<div class="t" style="left:431px;top:292px;color:#f92672;">=</div>
<div class="t" style="left:440px;top:292px;color:#f92672;">'</div>
<div class="t" style="left:449px;top:292px;color:#e6db74;">ls --color=always</div>
<div class="t" style="left:602px;top:292px;color:#f92672;">'</div>
<div class="t" style="left:611px;top:292px;color:#465457;">$</div>
<div class="t" style="left:332px;top:310px;color:#465457;">72</div>
<div class="t" style="left:359px;top:310px;color:#f92672;font-weight:bold;">alias</div>
<div class="t" style="left:413px;top:310px;color:#fd971f;">ll</div>
<div class="t" style="left:431px;top:310px;color:#f92672;">=</div>
<div class="t" style="left:440px;top:310px;color:#f92672;">'</div>
<div class="t" style="left:449px;top:310px;color:#e6db74;">ls -lFG</div>
<div class="t" style="left:512px;top:310px;color:#f92672;">'</div>
<div class="t" style="left:521px;top:310px;color:#465457;">$</div>
<div class="t" style="left:332px;top:328px;color:#465457;">73</div>
<div class="t" style="left:359px;top:328px;color:#f92672;font-weight:bold;">alias</div>
<div class="t" style="left:413px;top:328px;color:#fd971f;">la</div>
<div class="t" style="left:431px;top:328px;color:#f92672;">=</div>
<div class="t" style="left:440px;top:328px;color:#f92672;">'</div>
<div class="t" style="left:449px;top:328px;color:#e6db74;">ls -A</div>
<div class="t" style="left:494px;top:328px;color:#f92672;">'</div>
<div class="t" style="left:503px;top:328px;color:#465457;">$</div>
<div class="t" style="left:332px;top:346px;color:#465457;">74</div>
<div class="t" style="left:359px;top:346px;color:#f92672;font-weight:bold;">alias</div>
<div class="t" style="left:413px;top:346px;color:#fd971f;">l</div>
<div class="t" style="left:422px;top:346px;color:#f8f8f2;">=</div>
<div class="t" style="left:431px;top:346px;color:#f92672;">'</div>
<div class="t" style="left:440px;top:346px;color:#e6db74;">ls -CF</div>
<div class="t" style="left:494px;top:346px;color:#f92672;">'</div>
<div class="t" style="left:503px;top:346px;color:#465457;">$</div>
<div class="t" style="left:332px;top:364px;color:#465457;">75</div>
<div class="t" style="left:359px;top:364px;color:#465457;">$</div>
<div class="t" style="left:332px;top:382px;color:#465457;">76</div>
<div class="t" style="left:359px;top:382px;color:#879597;">#alias grep='grep —color=always' </div>
<div class="t" style="left:656px;top:382px;color:#465457;">$</div>
<div class="t" style="left:332px;top:400px;color:#465457;">77</div>
<div class="t" style="left:359px;top:400px;color:#f92672;font-weight:bold;">alias</div>
<div class="t" style="left:413px;top:400px;color:#fd971f;">reboot</div>
<div class="t" style="left:467px;top:400px;color:#f92672;">=</div>
<div class="t" style="left:476px;top:400px;color:#f92672;">'</div>
<div class="t" style="left:485px;top:400px;color:#e6db74;">sudo shutdown -r now </div>
<div class="t" style="left:674px;top:400px;color:#f92672;">'</div>
<div class="t" style="left:683px;top:400px;color:#465457;">$</div>
<div class="t" style="left:332px;top:418px;color:#465457;">78</div>
<div class="t" style="left:359px;top:418px;color:#f92672;font-weight:bold;">alias</div>
<div class="t" style="left:413px;top:418px;color:#fd971f;">halt</div>
<div class="t" style="left:449px;top:418px;color:#f92672;">=</div>
<div class="t" style="left:458px;top:418px;color:#f92672;">'</div>
<div class="t" style="left:467px;top:418px;color:#e6db74;">sudo shutdown -h now</div>
<div class="t" style="left:647px;top:418px;color:#f92672;">'</div>
<div class="t" style="left:656px;top:418px;color:#465457;">$</div>
<div class="t" style="left:332px;top:436px;color:#465457;">79</div>
<div class="t" style="left:359px;top:436px;color:#f92672;font-weight:bold;">alias</div>
<div class="t" style="left:413px;top:436px;color:#fd971f;">hibernate</div>
<div class="t" style="left:494px;top:436px;color:#f92672;">=</div>
<div class="t" style="left:503px;top:436px;color:#f92672;">'</div>
<div class="t" style="left:512px;top:436px;color:#e6db74;">sudo pm-hibernate</div>
<div class="t" style="left:665px;top:436px;color:#f92672;">'</div>
<div class="t" style="left:674px;top:436px;color:#465457;">$</div>
<div class="t" style="left:332px;top:454px;color:#465457;">80</div>
<div class="t" style="left:359px;top:454px;color:#f92672;font-weight:bold;">alias</div>
<div class="t" style="left:413px;top:454px;color:#fd971f;">suspend</div>
<div class="t" style="left:476px;top:454px;color:#f92672;">=</div>
<div class="t" style="left:485px;top:454px;color:#f92672;">'</div>
<div class="t" style="left:494px;top:454px;color:#e6db74;">sudo pm-suspend</div>
<div class="t" style="left:629px;top:454px;color:#f92672;">'</div>
<div class="t" style="left:638px;top:454px;color:#465457;">$</div>
<div class="t" style="left:332px;top:472px;color:#465457;">81</div>
<div class="t" style="left:359px;top:472px;color:#465457;">$</div>
<div class="t" style="left:332px;top:490px;color:#465457;">82</div>
<div class="t" style="left:359px;top:490px;color:#879597;">#other aliases</div>
<div class="t" style="left:485px;top:490px;color:#465457;">$</div>
<div class="t" style="left:332px;top:508px;color:#465457;">83</div>
<div class="t" style="left:359px;top:508px;color:#f92672;font-weight:bold;">alias</div>
<div class="t" style="left:413px;top:508px;color:#fd971f;">rm</div>
<div class="t" style="left:431px;top:508px;color:#f92672;">=</div>
<div class="t" style="left:440px;top:508px;color:#f92672;">'</div>
<div class="t" style="left:449px;top:508px;color:#e6db74;">rm -i</div>
<div class="t" style="left:494px;top:508px;color:#f92672;">'</div>
<div class="t" style="left:503px;top:508px;color:#465457;">$</div>
<div class="t" style="left:332px;top:526px;color:#465457;">84</div>
<div class="t" style="left:359px;top:526px;color:#465457;">$</div>
<div class="t" style="left:332px;top:544px;color:#465457;">85</div>
<div class="t" style="left:359px;top:544px;color:#f92672;font-weight:bold;">alias</div>
<div class="t" style="left:413px;top:544px;color:#fd971f;">mounthdd</div>
<div class="t" style="left:485px;top:544px;color:#f92672;">=</div>
<div class="t" style="left:494px;top:544px;color:#f92672;">'</div>
<div class="t" style="left:503px;top:544px;color:#e6db74;">sudo /usr/local/bin/ntfs-3g /dev/disk2s1 /Volumes/NTFS -olocal -oallow_other</div>
<div class="t" style="left:1187px;top:544px;color:#f92672;">'</div>
<div class="t" style="left:1196px;top:544px;color:#465457;">$</div>
<div class="t" style="left:332px;top:562px;color:#465457;">86</div>
<div class="t" style="left:359px;top:562px;color:#f92672;font-weight:bold;">alias</div>
<div class="t" style="left:413px;top:562px;color:#fd971f;">umounthdd</div>
<div class="t" style="left:494px;top:562px;color:#f92672;">=</div>
<div class="t" style="left:503px;top:562px;color:#f92672;">'</div>
<div class="t" style="left:512px;top:562px;color:#e6db74;">sudo umount /Volumes/NTFS</div>
<div class="t" style="left:737px;top:562px;color:#f92672;">'</div>
<div class="t" style="left:746px;top:562px;color:#465457;">$</div>
<div class="t" style="left:332px;top:580px;color:#465457;">87</div>
<div class="t" style="left:359px;top:580px;color:#465457;">$</div>
<div class="t" style="left:332px;top:598px;color:#465457;">88</div>
<div class="t" style="left:359px;top:598px;color:#879597;"># Run tmux in 256 colors mode</div>
<div class="t" style="left:620px;top:598px;color:#465457;">$</div>
<div class="t" style="left:332px;top:616px;color:#465457;">89</div>
<div class="t" style="left:359px;top:616px;color:#f92672;font-weight:bold;">alias</div>
<div class="t" style="left:413px;top:616px;color:#fd971f;">tmux</div>
<div class="t" style="left:449px;top:616px;color:#f92672;">=</div>
<div class="t" style="left:458px;top:616px;color:#f92672;">'</div>
<div class="t" style="left:467px;top:616px;color:#e6db74;">tmux -2</div>
<div class="t" style="left:530px;top:616px;color:#f92672;">'</div>
<div class="t" style="left:539px;top:616px;color:#465457;">$</div>
<div class="t" style="left:332px;top:634px;color:#465457;">90</div>
<div class="t" style="left:359px;top:634px;color:#879597;">#-------------------------------------------------------------</div>
<div class="t" style="left:917px;top:634px;color:#465457;">$</div>
<div style="left:305px;top:651px;width:1116px;height:18px;background:#262626;"></div>
<div style="left:305px;top:651px;width:72px;height:18px;background:#dfff00;"></div>
<div class="t" style="left:305px;top:652px;color:#00005f;font-weight:bold;"> NORMAL </div>
<div style="left:377px;top:651px;width:171px;height:18px;background:#464646;"></div>
<div class="t" style="left:377px;top:652px;color:#f8f8f2;"> +0 ~0 -0   master </div>
<svg style="position:absolute;left:467px;top:651px" width="10" height="15" viewBox="0 0 10 15"><path d="M1.8,2.8 L1.8,13.8 M1.8,10.2 C5.5,9.5 8.3,7.2 8.3,3" stroke="#f8f8f2" stroke-width="1.7" fill="none"/></svg>
<div class="t" style="left:548px;top:652px;color:#9ef8ce;"> alias.bash    sh </div>
<svg style="position:absolute;left:710px;top:654.8px" width="12" height="10" viewBox="0 0 12 10"><rect x="0" y="0" width="9.2" height="9.7" fill="#9ef8ce"/><path d="M2,2.6 L4,4.1 L2,5.6 M4.5,6.8 L7,6.8" stroke="#262626" stroke-width="0.8" fill="none"/></svg>
<div style="left:746px;top:651px;width:117px;height:18px;background:#464646;"></div>
<div class="t" style="left:746px;top:652px;color:#f8f8f2;">  utf-8      </div>
<svg style="position:absolute;left:817px;top:652.8px" width="13" height="14" viewBox="0 0 13 14"><g transform="scale(1.12)"><path d="M8.3,0.3 C8.4,1.6 7.4,3 6,3 C5.9,1.7 7,0.4 8.3,0.3 Z M5.6,3.6 C6.3,3.6 7,3.2 7.6,3.2 C8.4,3.2 9.5,3.6 10.1,4.6 C8.6,5.4 8.8,7.9 10.4,8.5 C9.9,9.9 9,11.5 7.9,11.5 C7.1,11.5 6.8,11 5.9,11 C5,11 4.6,11.5 3.9,11.5 C2.7,11.5 0.6,8.8 0.6,6.3 C0.6,4.1 2.2,3.3 3.4,3.3 C4.3,3.3 5,3.6 5.6,3.6 Z" fill="#f8f8f2"/></g></svg>
<div style="left:854px;top:651px;width:216px;height:18px;background:#dfff00;"></div>
<div class="t" style="left:872px;top:652px;color:#00005f;">92%</div>
<svg style="position:absolute;left:908.3px;top:656.3px" width="11" height="9" viewBox="0 0 11 9"><rect x="0" y="0" width="10.5" height="1.9" fill="#00005f"/><rect x="0" y="3.5" width="10.5" height="1.9" fill="#00005f"/><rect x="0" y="7" width="10.5" height="1.9" fill="#00005f"/></svg>
<div class="t" style="left:944px;top:652px;color:#00005f;font-weight:bold;">83/90</div>
<div class="t" style="left:998px;top:652px;color:#00005f;font-family:'Liberation Sans',sans-serif;font-size:15px;letter-spacing:0.8px;-webkit-text-stroke:0;">ln</div>
<div class="t" style="left:1025px;top:652px;color:#00005f;">:</div>
<div class="t" style="left:1052px;top:652px;color:#00005f;">1</div>
<div style="left:1070px;top:651px;width:351px;height:18px;background:#dc5f00;"></div>
<div class="t" style="left:1079px;top:652px;color:#111;">☲</div>
<div class="t" style="left:1097px;top:652px;color:#111;">[76]trailing [18:54]mix-indent-file</div>
<div class="t" style="left:305px;top:670px;color:#f8f8f2;">export PATH="$PATH:$HOME/.rvm/bin"</div>
<div class="t" style="left:305px;top:688px;color:#f8f8f2;">export PATH="/usr/local/opt/mysql@5.5/bin:$PATH"</div>
<div class="t" style="left:305px;top:706px;color:#f8f8f2;">source &lt;(kubectl completion bash)</div>
<div class="t" style="left:305px;top:724px;color:#f8f8f2;">source &lt;(kubectl completion bash)</div>
<div class="t" style="left:305px;top:760px;color:#f8f8f2;">bash: !: event not found</div>
<div style="left:305px;top:741px;width:27px;height:18px;background:#282828;"></div>
<svg style="position:absolute;left:313.2px;top:742.7px" width="13" height="14" viewBox="0 0 13 14"><g transform="scale(1.15)"><path d="M8.3,0.3 C8.4,1.6 7.4,3 6,3 C5.9,1.7 7,0.4 8.3,0.3 Z M5.6,3.6 C6.3,3.6 7,3.2 7.6,3.2 C8.4,3.2 9.5,3.6 10.1,4.6 C8.6,5.4 8.8,7.9 10.4,8.5 C9.9,9.9 9,11.5 7.9,11.5 C7.1,11.5 6.8,11 5.9,11 C5,11 4.6,11.5 3.9,11.5 C2.7,11.5 0.6,8.8 0.6,6.3 C0.6,4.1 2.2,3.3 3.4,3.3 C4.3,3.3 5,3.6 5.6,3.6 Z" fill="#f8f8f2"/></g></svg>
<div style="left:332px;top:741px;width:9px;height:18px;background:#0000df;"></div>
<svg style="position:absolute;left:332px;top:741px" width="9" height="18" viewBox="0 0 9 18"><polygon points="0,0 8,9 0,18" fill="#282828"/></svg>
<div style="left:341px;top:741px;width:99px;height:18px;background:#0000df;"></div>
<div class="t" style="left:350px;top:742px;color:#f8f8f2;">~/configs</div>
<div style="left:440px;top:741px;width:9px;height:18px;background:#e0e0e0;"></div>
<svg style="position:absolute;left:440px;top:741px" width="9" height="18" viewBox="0 0 9 18"><polygon points="0,0 8,9 0,18" fill="#0000df"/></svg>
<div style="left:449px;top:741px;width:108px;height:18px;background:#e0e0e0;"></div>
<svg style="position:absolute;left:458px;top:741px" width="9" height="18" viewBox="0 0 9 18"><path d="M2,0.5 L2,9 M2,17.6 L2,15 C2,11.5 5.6,10 5.6,6 L5.6,5" stroke="#111" stroke-width="1.9" fill="none"/><polygon points="3.6,5.6 7.6,5.6 5.6,2.6" fill="#111"/></svg>
<div class="t" style="left:476px;top:742px;color:#111;">master</div>
<svg style="position:absolute;left:539px;top:744.2px" width="10" height="12" viewBox="0 0 10 12"><path d="M9,0.8 C6.5,3.8 3.8,7.2 1,10.6" stroke="#e00000" stroke-width="2.5" stroke-linecap="round" fill="none"/><path d="M2.6,1.6 C4,4.6 5.6,7.4 7.6,9.6" stroke="#e00000" stroke-width="2.2" stroke-linecap="round" fill="none"/></svg>
<svg style="position:absolute;left:557px;top:741px" width="9" height="18" viewBox="0 0 9 18"><polygon points="0,0 8,9 0,18" fill="#e0e0e0"/></svg>
<div class="t" style="left:575px;top:742px;color:#3ef03e;font-weight:bold;">$</div>
<div class="t" style="left:584px;top:742px;color:#555;">_</div>
<div class="t" style="left:593px;top:742px;color:#f8f8f2;">:redraw!|call fugitive#Resume()|silent checktime</div>
<div style="left:305px;top:777px;width:27px;height:18px;background:#282828;"></div>
<svg style="position:absolute;left:313.2px;top:778.7px" width="13" height="14" viewBox="0 0 13 14"><g transform="scale(1.15)"><path d="M8.3,0.3 C8.4,1.6 7.4,3 6,3 C5.9,1.7 7,0.4 8.3,0.3 Z M5.6,3.6 C6.3,3.6 7,3.2 7.6,3.2 C8.4,3.2 9.5,3.6 10.1,4.6 C8.6,5.4 8.8,7.9 10.4,8.5 C9.9,9.9 9,11.5 7.9,11.5 C7.1,11.5 6.8,11 5.9,11 C5,11 4.6,11.5 3.9,11.5 C2.7,11.5 0.6,8.8 0.6,6.3 C0.6,4.1 2.2,3.3 3.4,3.3 C4.3,3.3 5,3.6 5.6,3.6 Z" fill="#f8f8f2"/></g></svg>
<div style="left:332px;top:777px;width:9px;height:18px;background:#0000df;"></div>
<svg style="position:absolute;left:332px;top:777px" width="9" height="18" viewBox="0 0 9 18"><polygon points="0,0 8,9 0,18" fill="#282828"/></svg>
<div style="left:341px;top:777px;width:99px;height:18px;background:#0000df;"></div>
<div class="t" style="left:350px;top:778px;color:#f8f8f2;">~/configs</div>
<div style="left:440px;top:777px;width:9px;height:18px;background:#e0e0e0;"></div>
<svg style="position:absolute;left:440px;top:777px" width="9" height="18" viewBox="0 0 9 18"><polygon points="0,0 8,9 0,18" fill="#0000df"/></svg>
<div style="left:449px;top:777px;width:126px;height:18px;background:#e0e0e0;"></div>
<svg style="position:absolute;left:458px;top:777px" width="9" height="18" viewBox="0 0 9 18"><path d="M2,0.5 L2,9 M2,17.6 L2,15 C2,11.5 5.6,10 5.6,6 L5.6,5" stroke="#111" stroke-width="1.9" fill="none"/><polygon points="3.6,5.6 7.6,5.6 5.6,2.6" fill="#111"/></svg>
<div class="t" style="left:476px;top:778px;color:#111;">master</div>
<svg style="position:absolute;left:539px;top:780.2px" width="10" height="12" viewBox="0 0 10 12"><path d="M9,0.8 C6.5,3.8 3.8,7.2 1,10.6" stroke="#e00000" stroke-width="2.5" stroke-linecap="round" fill="none"/><path d="M2.6,1.6 C4,4.6 5.6,7.4 7.6,9.6" stroke="#e00000" stroke-width="2.2" stroke-linecap="round" fill="none"/></svg>
<svg style="position:absolute;left:559.2px;top:781.6px" width="5" height="9" viewBox="0 0 5 9"><path d="M2.2,8 L2.2,3.5" stroke="#111" stroke-width="2.2"/><polygon points="0,4 4.4,4 2.2,0.5" fill="#111"/></svg>
<svg style="position:absolute;left:575px;top:777px" width="9" height="18" viewBox="0 0 9 18"><polygon points="0,0 8,9 0,18" fill="#e0e0e0"/></svg>
<div class="t" style="left:593px;top:778px;color:#3ef03e;font-weight:bold;">$</div>
<div class="t" style="left:602px;top:778px;color:#555;">_</div>
<div style="left:395px;top:1011px;width:1026px;height:18px;background:#242424;"></div>
<div class="t" style="left:26px;top:1012px;color:#555555;">/Users/akarneyeu/configs</div>
<div style="left:251px;top:1011px;width:45px;height:18px;background:#323437;"></div>
<div style="left:296px;top:1011px;width:9px;height:18px;background:#8a8a8a;"></div>
<div class="t" style="left:314px;top:1012px;color:#555555;">TERMINAL</div>
<div class="t" style="left:404px;top:1012px;color:#555555;">!/bin/bash [running]</div>
<div class="t" style="left:17px;top:1030px;color:#f8f8f2;">"alias.bash" line 83 of 90 --92%-- col 1</div>
<svg style="position:absolute;left:1203px;top:427px" width="18" height="24" viewBox="0 0 18 24"><polygon points="3.1,3 3.1,17.8 6.6,14.6 8.9,19.6 11.2,18.8 9,13.8 13.9,13.7" fill="#000" stroke="#f4f4f4" stroke-width="1.15" stroke-linejoin="round"/></svg>
</body></html>
